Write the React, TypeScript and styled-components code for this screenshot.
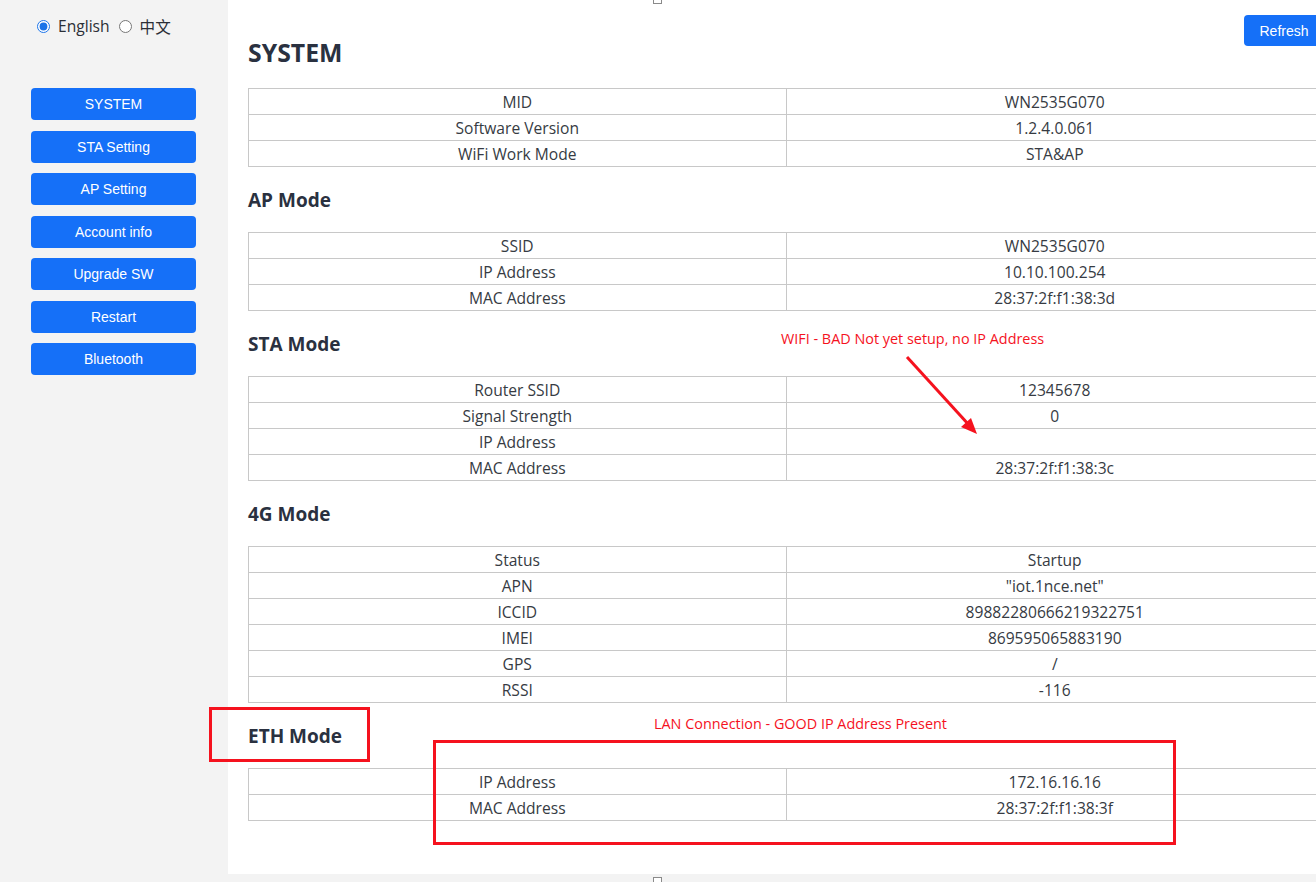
import styled, { createGlobalStyle } from "styled-components";

const GlobalStyle = createGlobalStyle`
  html, body {
    margin: 0;
    padding: 0;
    background: #f3f3f3;
    overflow: hidden;
  }
  * {
    box-sizing: border-box;
  }
`;

type Row = [string, string];

const sections: { title: string; rows: Row[] }[] = [
  {
    title: "AP Mode",
    rows: [
      ["SSID", "WN2535G070"],
      ["IP Address", "10.10.100.254"],
      ["MAC Address", "28:37:2f:f1:38:3d"],
    ],
  },
  {
    title: "STA Mode",
    rows: [
      ["Router SSID", "12345678"],
      ["Signal Strength", "0"],
      ["IP Address", ""],
      ["MAC Address", "28:37:2f:f1:38:3c"],
    ],
  },
  {
    title: "4G Mode",
    rows: [
      ["Status", "Startup"],
      ["APN", '"iot.1nce.net"'],
      ["ICCID", "89882280666219322751"],
      ["IMEI", "869595065883190"],
      ["GPS", "/"],
      ["RSSI", "-116"],
    ],
  },
  {
    title: "ETH Mode",
    rows: [
      ["IP Address", "172.16.16.16"],
      ["MAC Address", "28:37:2f:f1:38:3f"],
    ],
  },
];

const systemRows: Row[] = [
  ["MID", "WN2535G070"],
  ["Software Version", "1.2.4.0.061"],
  ["WiFi Work Mode", "STA&AP"],
];

const menu = [
  "SYSTEM",
  "STA Setting",
  "AP Setting",
  "Account info",
  "Upgrade SW",
  "Restart",
  "Bluetooth",
];

const InfoTable = ({ rows }: { rows: Row[] }) => (
  <Table>
    <tbody>
      {rows.map(([k, v], i) => (
        <tr key={i}>
          <td>{k}</td>
          <td>{v}</td>
        </tr>
      ))}
    </tbody>
  </Table>
);

const App = (): JSX.Element => {
  return (
    <Page>
      <GlobalStyle />
      <Sidebar>
        <LangRow>
          <label>
            <input type="radio" name="lang" defaultChecked />
            English
          </label>
          <label>
            <input type="radio" name="lang" />
            中文
          </label>
        </LangRow>
        <Menu>
          {menu.map((m) => (
            <MenuButton key={m}>{m}</MenuButton>
          ))}
        </Menu>
      </Sidebar>

      <Main>
        <Header>
          <Title>SYSTEM</Title>
          <RefreshButton>Refresh</RefreshButton>
        </Header>
        <InfoTable rows={systemRows} />
        {sections.map((s) => (
          <div key={s.title}>
            <SectionTitle>{s.title}</SectionTitle>
            <InfoTable rows={s.rows} />
          </div>
        ))}
      </Main>

      <Handle $top={-3} />
      <Handle $top={877} />

      <Note $x={781} $y={329}>WIFI - BAD Not yet setup, no IP Address</Note>
      <Arrow viewBox="0 0 100 100">
        <line x1="12" y1="7" x2="74" y2="75" stroke="#f5121e" strokeWidth="3" />
        <polygon points="82,84 66,77 76,68" fill="#f5121e" />
      </Arrow>
      <Note $x={654} $y={714}>LAN Connection - GOOD IP Address Present</Note>
      <Frame $x={209} $y={707} $w={161} $h={55} />
      <Frame $x={433} $y={740} $w={743} $h={105} />
    </Page>
  );
};

const Page = styled.div`
  position: relative;
  display: flex;
  align-items: flex-start;
  width: 1316px;
  height: 882px;
  overflow: hidden;
  background: #f3f3f3;
  font-family: "Open Sans", "Noto Sans CJK SC", sans-serif;
`;

const Sidebar = styled.aside`
  flex: 0 0 228px;
  display: flex;
  flex-direction: column;
  padding-top: 14px;
`;

const LangRow = styled.div`
  display: flex;
  align-items: center;
  gap: 9px;
  padding-left: 37px;
  height: 24px;
  font-size: 15.6px;
  color: #2b2f36;

  label {
    display: flex;
    align-items: center;
    gap: 8px;
  }

  input {
    margin: 0;
    width: 13px;
    height: 13px;
    accent-color: #1a73e8;
  }
`;

const Menu = styled.nav`
  display: flex;
  flex-direction: column;
  gap: 10.5px;
  margin-top: 50px;
  padding-left: 31px;
`;

const MenuButton = styled.button`
  width: 165px;
  height: 32px;
  border: none;
  border-radius: 4px;
  background: #1570f8;
  color: #ffffff;
  font-family: "Liberation Sans", Arial, sans-serif;
  font-size: 14px;
  cursor: pointer;
`;

const Main = styled.main`
  flex: 0 0 1116px;
  height: 874px;
  background: #ffffff;
  padding: 15px 20px 0;
  color: #333840;
`;

const Header = styled.div`
  display: flex;
  justify-content: space-between;
  align-items: flex-start;
  margin-bottom: 20px;
`;

const Title = styled.h2`
  margin: 21px 0 0;
  font-size: 24.8px;
  line-height: 32px;
  font-weight: 700;
  color: #2a3140;
`;

const RefreshButton = styled.button`
  width: 80px;
  height: 31px;
  border: none;
  border-radius: 4px;
  background: #1570f8;
  color: #ffffff;
  font-family: "Liberation Sans", Arial, sans-serif;
  font-size: 14px;
  padding: 0;
  cursor: pointer;
`;

const SectionTitle = styled.h3`
  margin: 20px 0 19px;
  font-size: 19px;
  line-height: 26px;
  font-weight: 700;
  color: #2a3140;
`;

const Table = styled.table`
  width: 1076px;
  border-collapse: collapse;
  table-layout: fixed;

  td {
    width: 50%;
    height: 26px;
    padding: 0;
    border: 1px solid #c8c8c8;
    text-align: center;
    font-size: 15.6px;
    line-height: 24px;
    color: #363b43;
  }
`;

const Handle = styled.div<{ $top: number }>`
  position: absolute;
  left: 653px;
  top: ${(p) => p.$top}px;
  width: 9px;
  height: 7px;
  border: 1px solid #8a8a8a;
  background: #ffffff;
`;

const Note = styled.div<{ $x: number; $y: number }>`
  position: absolute;
  left: ${(p) => p.$x}px;
  top: ${(p) => p.$y}px;
  font-size: 14.4px;
  line-height: 20px;
  color: #f5121e;
  white-space: nowrap;
`;

const Arrow = styled.svg`
  position: absolute;
  left: 895px;
  top: 350px;
  width: 100px;
  height: 100px;
`;

const Frame = styled.div<{ $x: number; $y: number; $w: number; $h: number }>`
  position: absolute;
  left: ${(p) => p.$x}px;
  top: ${(p) => p.$y}px;
  width: ${(p) => p.$w}px;
  height: ${(p) => p.$h}px;
  border: 3px solid #f5121e;
`;

export default App;
